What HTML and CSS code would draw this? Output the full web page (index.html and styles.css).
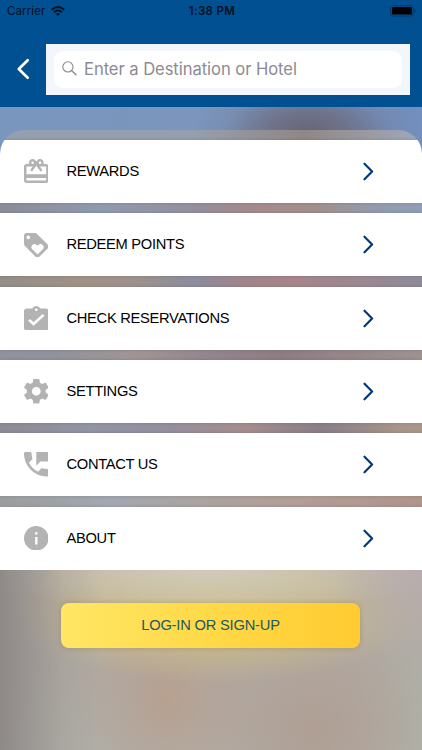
FILE: index.html
```html
<!DOCTYPE html>
<html lang="en">
<head>
<meta charset="utf-8">
<meta name="viewport" content="width=device-width, initial-scale=1">
<title>Menu</title>
<link rel="stylesheet" href="styles.css">
</head>
<body>
<div class="screen">
  <header class="header">
    <div class="status">
      <div class="carrier"><span>Carrier</span>
        <svg class="wifi" viewBox="0 0 14 10"><g fill="none" stroke="#06111f" stroke-width="1.9"><path d="M.8 3.8Q7-1.6 13.2 3.8"/><path d="M3 6.2Q7 2.8 11 6.2"/></g><path fill="#06111f" d="M4.9 7.8Q7 6.2 9.1 7.8L7 10z"/></svg>
      </div>
      <div class="time">1:38 PM</div>
      <svg class="battery" viewBox="0 0 27 12"><rect x=".6" y=".6" width="22.6" height="10.4" rx="2.6" fill="none" stroke="#063768" stroke-width="1"/><rect x="2" y="2" width="19.8" height="7.6" rx="1.2"/><path d="M24.5 4v4q1.4-.7 1.4-2t-1.4-2" fill="#063768"/></svg>
    </div>
    <div class="nav">
      <svg class="back" viewBox="0 0 14 22"><path d="M11.7 2.2L2.8 11l8.9 8.8" fill="none" stroke="#fff" stroke-width="2.7" stroke-linecap="round" stroke-linejoin="round"/></svg>
      <div class="search"><div class="field">
        <svg class="glass" viewBox="0 0 15 15"><g fill="none" stroke="#8b8b90" stroke-width="1.1" stroke-linecap="round"><circle cx="5.9" cy="5.9" r="5.1"/><path d="M9.7 9.7l4.3 4.1" stroke-width="1.4"/></g></svg>
        <span>Enter a Destination or Hotel</span>
      </div></div>
    </div>
  </header>
  <main class="content">
    <ul class="menu">
      <li><svg class="icon" viewBox="2 2 20 19.5" preserveAspectRatio="none"><path d="M20 6h-2.18c.11-.31.18-.65.18-1 0-1.66-1.34-3-3-3-1.05 0-1.96.54-2.5 1.35l-.5.67-.5-.68C10.96 2.54 10.05 2 9 2 7.34 2 6 3.34 6 5c0 .35.07.69.18 1H4c-1.11 0-1.99.89-1.99 2L2 19c0 1.11.89 2 2 2h16c1.11 0 2-.89 2-2V8c0-1.11-.89-2-2-2zm-5-2c.55 0 1 .45 1 1s-.45 1-1 1-1-.45-1-1 .45-1 1-1zM9 4c.55 0 1 .45 1 1s-.45 1-1 1-1-.45-1-1 .45-1 1-1zm11 15H4v-2h16v2zm0-5H4V8h5.08L7 10.83 8.62 12 11 8.76l1-1.36 1 1.36L15.38 12 17 10.83 14.92 8H20v6z"/></svg><span>REWARDS</span><svg class="chevron" viewBox="0 0 11 19"><path d="M1.5 1.7l7.6 7.8-7.6 7.8"/></svg></li>
      <li><svg class="icon" viewBox="2 2 20 20"><path d="M21.41 11.58l-9-9C12.05 2.22 11.55 2 11 2H4c-1.1 0-2 .9-2 2v7c0 .55.22 1.05.59 1.42l9 9c.36.36.86.58 1.41.58.55 0 1.05-.22 1.41-.59l7-7c.37-.36.59-.86.59-1.41 0-.55-.23-1.06-.59-1.42zM5.5 7C4.67 7 4 6.33 4 5.5S4.67 4 5.5 4 7 4.67 7 5.5 6.33 7 5.5 7zm11.77 8.27L13 19.54l-4.27-4.27C8.28 14.81 8 14.19 8 13.5c0-1.38 1.12-2.5 2.5-2.5.69 0 1.32.28 1.77.74l.73.72.73-.73c.45-.45 1.08-.73 1.77-.73 1.38 0 2.5 1.12 2.5 2.5 0 .69-.28 1.32-.73 1.77z"/></svg><span>REDEEM POINTS</span><svg class="chevron" viewBox="0 0 11 19"><path d="M1.5 1.7l7.6 7.8-7.6 7.8"/></svg></li>
      <li><svg class="icon" viewBox="3 1 18 20" preserveAspectRatio="none"><path d="M19 3h-4.18C14.4 1.84 13.3 1 12 1c-1.3 0-2.4.84-2.82 2H5c-1.1 0-2 .9-2 2v14c0 1.1.9 2 2 2h14c1.1 0 2-.9 2-2V5c0-1.1-.9-2-2-2zm-7 0c.55 0 1 .45 1 1s-.45 1-1 1-1-.45-1-1 .45-1 1-1zm-2 14l-4-4 1.41-1.41L10 14.17l6.59-6.59L18 9l-8 8z"/></svg><span>CHECK RESERVATIONS</span><svg class="chevron" viewBox="0 0 11 19"><path d="M1.5 1.7l7.6 7.8-7.6 7.8"/></svg></li>
      <li><svg class="icon" viewBox="2.2 2 19.6 20" preserveAspectRatio="none"><path d="M19.43 12.98c.04-.32.07-.64.07-.98s-.03-.66-.07-.98l2.11-1.65c.19-.15.24-.42.12-.64l-2-3.46c-.12-.22-.39-.3-.61-.22l-2.49 1c-.52-.4-1.08-.73-1.69-.98l-.38-2.65C14.46 2.18 14.25 2 14 2h-4c-.25 0-.46.18-.49.42l-.38 2.65c-.61.25-1.17.59-1.69.98l-2.49-1c-.23-.09-.49 0-.61.22l-2 3.46c-.13.22-.07.49.12.64l2.11 1.65c-.04.32-.07.65-.07.98s.03.66.07.98l-2.11 1.65c-.19.15-.24.42-.12.64l2 3.46c.12.22.39.3.61.22l2.49-1c.52.4 1.08.73 1.69.98l.38 2.65c.03.24.24.42.49.42h4c.25 0 .46-.18.49-.42l.38-2.65c.61-.25 1.17-.59 1.69-.98l2.49 1c.23.09.49 0 .61-.22l2-3.46c.12-.22.07-.49-.12-.64l-2.11-1.65zM12 15.5c-1.93 0-3.5-1.57-3.5-3.5s1.57-3.5 3.5-3.5 3.5 1.57 3.5 3.5-1.57 3.5-3.5 3.5z"/></svg><span>SETTINGS</span><svg class="chevron" viewBox="0 0 11 19"><path d="M1.5 1.7l7.6 7.8-7.6 7.8"/></svg></li>
      <li><svg class="icon" viewBox="3 3 18 18"><path d="M20 15.5c-1.25 0-2.45-.2-3.57-.57-.35-.11-.74-.03-1.02.24l-2.2 2.2c-2.83-1.44-5.15-3.75-6.59-6.58l2.2-2.21c.28-.27.36-.66.25-1.01C8.7 6.45 8.5 5.25 8.5 4c0-.55-.45-1-1-1H4c-.55 0-1 .45-1 1 0 9.39 7.61 17 17 17 .55 0 1-.45 1-1v-3.5c0-.55-.45-1-1-1zM12 3v10l3-3h6V3h-9z"/></svg><span>CONTACT US</span><svg class="chevron" viewBox="0 0 11 19"><path d="M1.5 1.7l7.6 7.8-7.6 7.8"/></svg></li>
      <li><svg class="icon" viewBox="2 2 20 20"><path d="M12 2C6.48 2 2 6.48 2 12s4.48 10 10 10 10-4.48 10-10S17.52 2 12 2zm1 15h-2v-6h2v6zm0-8h-2V7h2v2z"/></svg><span>ABOUT</span><svg class="chevron" viewBox="0 0 11 19"><path d="M1.5 1.7l7.6 7.8-7.6 7.8"/></svg></li>
    </ul>
    <div class="footer"><button class="login">LOG-IN OR SIGN-UP</button></div>
  </main>
</div>
</body>
</html>
```
FILE: styles.css
```css
* { box-sizing: border-box; }
body { margin: 0; font-family: "Liberation Sans", Arial, sans-serif; }
.screen { width: 422px; height: 750px; overflow: hidden; display: flex; flex-direction: column; }
.header { height: 107px; background: #005092; flex: none; }
.status {
  height: 44px; padding: 4px 5px 0 7px; display: grid; grid-template-columns: 1fr auto 1fr;
  align-items: start; color: #06111f; font: 11.5px/14px Inter, sans-serif;
}
.carrier { display: flex; align-items: center; gap: 6px; letter-spacing: .1px; }
.wifi { width: 14px; height: 10px; }
.time { font-weight: 600; letter-spacing: .35px; }
.battery { width: 27px; height: 12px; justify-self: end; margin-top: 1px; }
.nav { display: flex; align-items: center; height: 50.5px; padding: 0 12.5px 0 16px; }
.back { width: 14px; height: 22px; margin-right: 16px; }
.search { flex: 1; height: 50.5px; padding: 7px 8px; background: #f3f7fb; }
.field {
  height: 37px; border-radius: 9px; background: #fff; display: flex; align-items: center;
  padding: 0 0 2px 8px; gap: 7px; color: #8b8b90; font: 16.6px/20px Inter, sans-serif; letter-spacing: -.06px; white-space: nowrap;
}
.glass { width: 15px; height: 15px; }
.content {
  flex: 1; padding-top: 23px; display: flex; flex-direction: column;
  background:
    radial-gradient(ellipse 115px 62px at 308px 26px, rgba(104,98,112,.95) 0, rgba(106,102,118,.7) 35%, rgba(112,120,148,.25) 72%, transparent 100%),
    linear-gradient(90deg, #7896be, #7c95bc 50%, #738fbe);
}
.menu {
  list-style: none; margin: 0; padding: 10px 0 0; height: 439.6px; flex: none;
  display: grid; grid-auto-rows: 63px; row-gap: 10.32px; overflow: hidden; border-radius: 24px 24px 0 0;
  background:
    linear-gradient(90deg, #949fb0, #95a0ae 45%, #8f8785 72%, #9b9ba3 88%, #99a9be) 0 0 / 100% 10px,
    linear-gradient(90deg, #8a8e98, #8e9bae 24%, #958f9b 48%, #a68a8c 60%, #a18f88 73%, #929caf 90%, #8f9eb6) 0 73px / 100% 10.5px,
    linear-gradient(90deg, #938e89, #9f9285 18%, #9c918e 33%, #8c8c9e 46%, #a1858a 58%, #a7858a 69%, #8e8b98) 0 146px / 100% 11px,
    linear-gradient(90deg, #91939c, #90939c 13%, #a19594 32%, #93868e 49%, #8e7c83 66%, #9d9390) 0 219px / 100% 11px,
    linear-gradient(90deg, #8e8b94, #9095a4 21%, #948f9d 40%, #a58d8d 58%, #887e87 76%, #a8968b 95%) 0 292.5px / 100% 11px,
    linear-gradient(90deg, #9b9e9e, #a2a7b1 26%, #aaa39f 48%, #b19e97 70%, #af958b) 0 365.5px / 100% 11px;
  background-repeat: no-repeat;
}
.menu li {
  display: flex; align-items: center; padding: 0 48px 0 23.7px; background: #fff;
  font-size: 14.7px; letter-spacing: -.3px; color: #000; box-shadow: 0 0 3px rgba(60,50,50,.22);
}
.menu li span { margin-top: -1px; }
.icon { width: 24.6px; height: 24.6px; margin-right: 18.2px; fill: #b3b3b3; }
.chevron { width: 11px; height: 19px; margin-left: auto; fill: none; stroke: #003a7d; stroke-width: 2.2; stroke-linecap: round; stroke-linejoin: round; }
.footer {
  flex: 1; padding-top: 33px; display: flex; justify-content: center; align-items: flex-start;
  background:
    linear-gradient(90deg, rgba(136,131,131,.85), rgba(140,136,135,.6) 7%, rgba(150,146,142,.25) 15%, transparent 24%),
    radial-gradient(ellipse 90px 90px at 422px 0, rgba(183,173,175,.9), rgba(183,173,175,.4) 55%, transparent),
    radial-gradient(ellipse 240px 44px at 210px 0, rgba(209,204,189,.95), rgba(209,204,189,.4) 60%, transparent),
    radial-gradient(ellipse 210px 75px at 215px 38px, rgba(209,195,140,.9), rgba(204,188,135,.65) 55%, transparent),
    radial-gradient(ellipse 90px 110px at 168px 130px, rgba(184,158,140,.85), rgba(182,160,146,.5) 45%, transparent),
    radial-gradient(ellipse 130px 110px at 315px 160px, rgba(175,157,146,.9), rgba(176,160,150,.6) 50%, transparent),
    radial-gradient(ellipse 80px 110px at 422px 160px, rgba(174,180,171,.9), transparent),
    linear-gradient(#b5aca4, #b0aaa3 55%, #b0afa8);
}
.login {
  width: 299px; height: 45px; margin: 0 1px 0 0; padding: 0; border: 0; border-radius: 8px;
  background: linear-gradient(90deg, #ffe665, #ffd947 50%, #ffcb31); color: #1b5764;
  font: 14.7px/44px "Liberation Sans", Arial, sans-serif; letter-spacing: -.2px;
  box-shadow: 0 0 5px rgba(110,90,40,.3);
}
```
